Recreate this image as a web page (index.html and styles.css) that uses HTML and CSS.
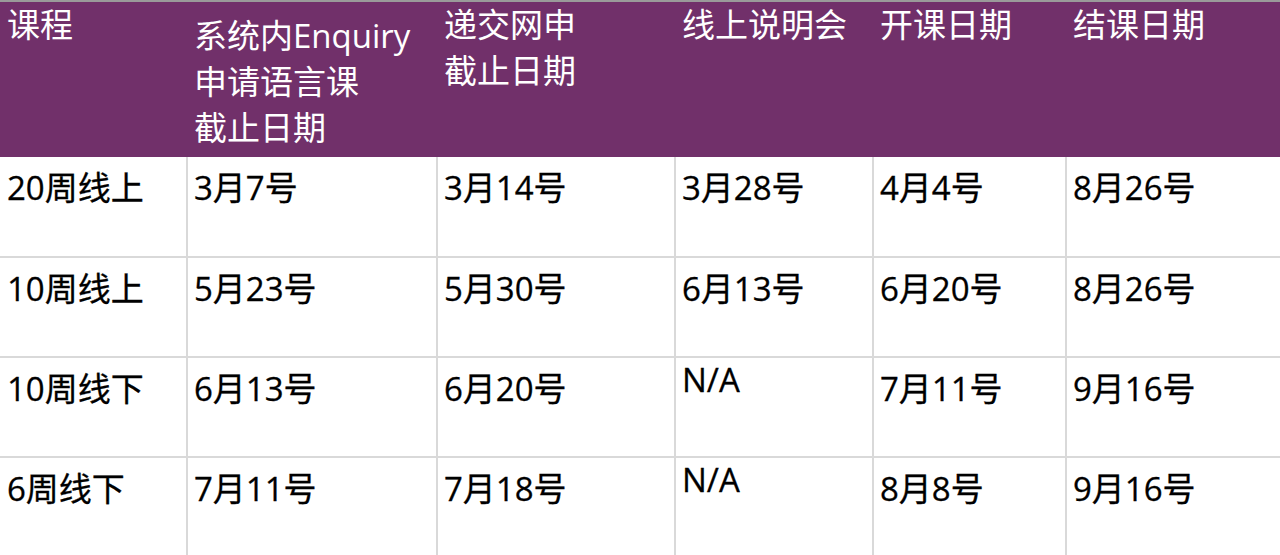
FILE: index.html
```html
<!DOCTYPE html>
<html lang="zh">
<head>
<meta charset="utf-8">
<link rel="stylesheet" href="styles.css">
</head>
<body>
<table class="schedule">
  <colgroup>
    <col class="c1"><col class="c2"><col class="c3"><col class="c4"><col class="c5"><col class="c6">
  </colgroup>
  <thead>
    <tr>
      <th>课程</th>
      <th class="offset">系统内Enquiry<br>申请语言课<br>截止日期</th>
      <th>递交网申<br>截止日期</th>
      <th>线上说明会</th>
      <th>开课日期</th>
      <th>结课日期</th>
    </tr>
  </thead>
  <tbody>
    <tr><td>20周线上</td><td>3月7号</td><td>3月14号</td><td>3月28号</td><td>4月4号</td><td>8月26号</td></tr>
    <tr><td>10周线上</td><td>5月23号</td><td>5月30号</td><td>6月13号</td><td>6月20号</td><td>8月26号</td></tr>
    <tr><td>10周线下</td><td>6月13号</td><td>6月20号</td><td class="na">N/A</td><td>7月11号</td><td>9月16号</td></tr>
    <tr><td>6周线下</td><td>7月11号</td><td>7月18号</td><td class="na">N/A</td><td>8月8号</td><td>9月16号</td></tr>
  </tbody>
</table>
</body>
</html>
```

FILE: styles.css
```css
html, body {
  margin: 0;
  padding: 0;
  background: #ffffff;
}
body {
  font-family: "Open Sans", "Noto Sans CJK SC", sans-serif;
  overflow: hidden;
}
.schedule {
  width: 1280px;
  border-collapse: collapse;
  table-layout: fixed;
  border-top: 2px solid #9a9a9a;
}
.c1 { width: 187px; }
.c2 { width: 250px; }
.c3 { width: 238px; }
.c4 { width: 198px; }
.c5 { width: 193px; }
.c6 { width: 214px; }
.schedule th {
  background: #71306a;
  color: #ffffff;
  font-weight: normal;
  font-size: 33px;
  line-height: 46px;
  text-align: left;
  vertical-align: top;
  height: 156px;
  padding: 0 0 0 7px;
  box-sizing: border-box;
  white-space: nowrap;
  overflow: hidden;
}
.schedule th.offset {
  padding-top: 11px;
}
.schedule td {
  font-size: 33px;
  line-height: 40px;
  color: #000000;
  vertical-align: top;
  height: 100px;
  padding: 11px 0 0 6px;
  box-sizing: border-box;
  border: 2px solid #d9d9d9;
  border-top: none;
  white-space: nowrap;
  -webkit-text-stroke: 0.3px #000000;
}
.schedule tbody tr td:first-child { border-left: none; padding-left: 7px; }
.schedule tbody tr td:last-child { border-right: none; }
.schedule tbody tr:last-child td { border-bottom: none; }
.schedule td.na {
  padding-top: 2px;
}
```
